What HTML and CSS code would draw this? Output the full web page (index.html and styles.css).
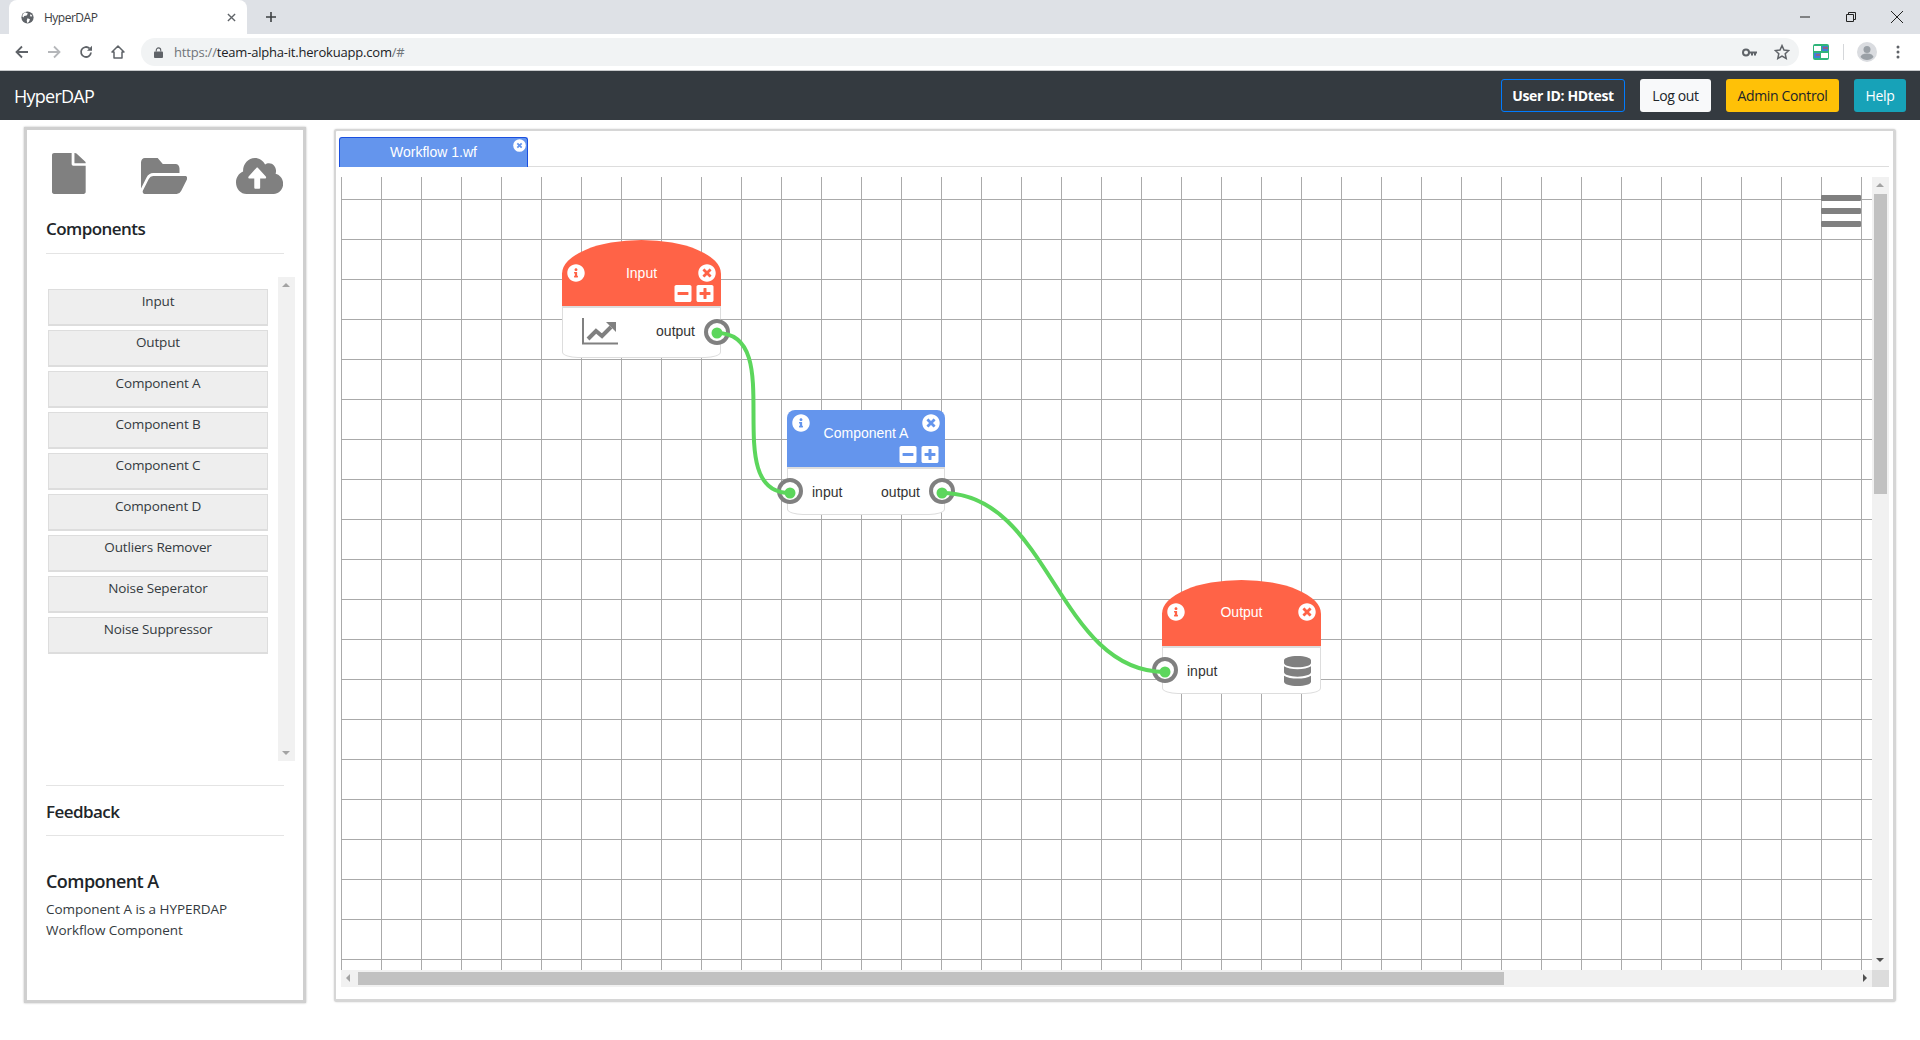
FILE: index.html
```html
<!doctype html>
<html lang="en">
  <head>
    <meta charset="UTF-8" />
    <meta name="viewport" content="width=device-width, initial-scale=1.0" />
    <title>HyperDAP</title>
    <link rel="stylesheet" href="styles.css">
  </head>
  <body>
    <svg class="defs" aria-hidden="true">
      <symbol id="i-info" viewBox="0 0 512 512"><path d="M256 8C119.043 8 8 119.083 8 256c0 136.997 111.043 248 248 248s248-111.003 248-248C504 119.083 392.957 8 256 8zm0 110c23.196 0 42 18.804 42 42s-18.804 42-42 42-42-18.804-42-42 18.804-42 42-42zm56 254c0 6.627-5.373 12-12 12h-88c-6.627 0-12-5.373-12-12v-24c0-6.627 5.373-12 12-12h12v-64h-12c-6.627 0-12-5.373-12-12v-24c0-6.627 5.373-12 12-12h64c6.627 0 12 5.373 12 12v100h12c6.627 0 12 5.373 12 12v24z"/></symbol>
      <symbol id="i-close" viewBox="0 0 512 512"><path d="M256 8C119 8 8 119 8 256s111 248 248 248 248-111 248-248S393 8 256 8zm121.6 313.1c4.7 4.7 4.7 12.3 0 17L338 377.6c-4.7 4.7-12.3 4.7-17 0L256 312l-65.1 65.6c-4.7 4.7-12.3 4.7-17 0L134.4 338c-4.7-4.7-4.7-12.3 0-17l65.6-65-65.6-65.1c-4.7-4.7-4.7-12.3 0-17l39.6-39.6c4.7-4.7 12.3-4.7 17 0l65 65.7 65.1-65.6c4.7-4.7 12.3-4.7 17 0l39.6 39.6c4.7 4.7 4.7 12.3 0 17L312 256l65.6 65.1z"/></symbol>
      <symbol id="i-minus" viewBox="0 32 448 448"><path d="M400 32H48C21.5 32 0 53.5 0 80v352c0 26.5 21.5 48 48 48h352c26.5 0 48-21.5 48-48V80c0-26.5-21.5-48-48-48zM92 296c-6.6 0-12-5.4-12-12v-56c0-6.6 5.4-12 12-12h264c6.6 0 12 5.4 12 12v56c0 6.6-5.4 12-12 12H92z"/></symbol>
      <symbol id="i-plus" viewBox="0 32 448 448"><path d="M400 32H48C21.5 32 0 53.5 0 80v352c0 26.5 21.5 48 48 48h352c26.5 0 48-21.5 48-48V80c0-26.5-21.5-48-48-48zm-32 252c0 6.6-5.4 12-12 12h-92v92c0 6.6-5.4 12-12 12h-56c-6.6 0-12-5.4-12-12v-92H92c-6.6 0-12-5.4-12-12v-56c0-6.6 5.4-12 12-12h92v-92c0-6.6 5.4-12 12-12h56c6.6 0 12 5.4 12 12v92h92c6.6 0 12 5.4 12 12v56z"/></symbol>
    </svg>

    <div class="tabstrip">
      <div class="browser-tab">
        <svg class="favicon" viewBox="0 0 16 16"><circle cx="8" cy="8" r="7.5" fill="#5f6368"/><path d="M5 1.5 8.5 3 7 5.5 4 6 3 8 1.5 6.5 3 3zM8 9l3 1-1 3-2 2-1-3zM12 4l2 2-2 1-1-2z" fill="#fff"/></svg>
        <span class="browser-tab-title">HyperDAP</span>
        <svg class="tab-x" viewBox="0 0 10 10"><path d="M1 1l8 8M9 1l-8 8" stroke="#5f6368" stroke-width="1.5"/></svg>
      </div>
      <svg class="new-tab" viewBox="0 0 12 12"><path d="M6 1v10M1 6h10" stroke="#3c4043" stroke-width="1.6"/></svg>
      <div class="window-controls">
        <svg viewBox="0 0 10 10"><path d="M0 5h10" stroke="#222" stroke-width="1"/></svg>
        <svg viewBox="0 0 10 10"><path d="M.5 2.5h7v7h-7zM2.5 2.5v-2h7v7h-2" fill="none" stroke="#222"/></svg>
        <svg viewBox="0 0 14 14"><path d="M1 1l12 12M13 1L1 13" stroke="#222" stroke-width="1"/></svg>
      </div>
    </div>

    <div class="toolbar">
      <svg class="tool" viewBox="0 0 14 14"><path d="M13 7H2M7 1.5 1.5 7 7 12.5" fill="none" stroke="#5f6368" stroke-width="1.8"/></svg>
      <svg class="tool" viewBox="0 0 14 14"><path d="M1 7h11M7 1.5 12.5 7 7 12.5" fill="none" stroke="#b5b7ba" stroke-width="1.8"/></svg>
      <svg class="tool" viewBox="0 0 14 14"><path d="M12 7.5A5 5 0 1 1 10.5 3.4" fill="none" stroke="#5f6368" stroke-width="1.8"/><path d="M13 .8v5H8z" fill="#5f6368"/></svg>
      <svg class="tool" viewBox="0 0 14 14"><path d="M7 1 1 7h2v6h8V7h2z" fill="none" stroke="#5f6368" stroke-width="1.5" stroke-linejoin="round"/></svg>
      <div class="omnibox">
        <svg class="lock" viewBox="0 0 10 12"><path d="M2.5 5V3.4a2.5 2.5 0 0 1 5 0V5" fill="none" stroke="#5f6368" stroke-width="1.2"/><rect y="5" width="10" height="7" rx="1" fill="#5f6368"/></svg>
        <span class="url"><span class="url-dim">https://</span>team-alpha-it.herokuapp.com<span class="url-dim">/#</span></span>
        <svg class="key" viewBox="0 0 15 9"><circle cx="4" cy="4.5" r="3" fill="none" stroke="#5f6368" stroke-width="2"/><path d="M6 3.5h9v2h-1v2h-2v-2h-1v2H9v-2H6z" fill="#5f6368"/></svg>
        <svg class="star" viewBox="0 0 16 16"><path d="M8 1.6l2 4.4 4.7.5-3.5 3.2 1 4.7L8 12l-4.200 2.400 1-4.700L1.300 6.500 6 6z" fill="none" stroke="#5f6368" stroke-width="1.5"/></svg>
      </div>
      <svg class="ext" viewBox="0 0 16 16"><rect width="16" height="16" rx="2" fill="#2fb57a"/><rect x="1" y="2" width="7" height="5" fill="#fff"/><rect x="8" y="9" width="7" height="5" fill="#fff"/><rect x="9" y="2" width="6" height="5" fill="#3f7fd6"/><rect x="1" y="9" width="6" height="5" fill="#3f7fd6"/><path d="M10 4h5M3 11h4" stroke="#e0433a"/></svg>
      <span class="toolbar-sep"></span>
      <svg class="avatar" viewBox="0 0 20 20"><circle cx="10" cy="10" r="10" fill="#dadce0"/><circle cx="10" cy="7.500" r="3.500" fill="#9aa0a6"/><path d="M3.500 15c1-3 4-3.500 6.500-3.500s5.500.5 6.500 3.500c-1.500 2-4 3-6.500 3s-5-1-6.500-3z" fill="#9aa0a6"/></svg>
      <svg class="menu-dots" viewBox="0 0 4 14"><circle cx="2" cy="2" r="1.500"/><circle cx="2" cy="7" r="1.500"/><circle cx="2" cy="12" r="1.500"/></svg>
    </div>

    <nav class="navbar">
      <a class="brand">HyperDAP</a>
      <div class="nav-buttons">
        <button class="btn btn-user">User ID: HDtest</button>
        <button class="btn btn-light">Log out</button>
        <button class="btn btn-warning">Admin Control</button>
        <button class="btn btn-info">Help</button>
      </div>
    </nav>

    <main class="main">
      <aside class="sidebar">
        <div class="file-icons">
          <svg class="icon-file" viewBox="0 0 384 512" preserveAspectRatio="none"><path d="M224 136V0H24C10.700 0 0 10.700 0 24v464c0 13.300 10.700 24 24 24h336c13.300 0 24-10.700 24-24V160H248c-13.200 0-24-10.800-24-24zm160-14.100v6.100H256V0h6.100c6.400 0 12.500 2.500 17 7l97.900 98c4.500 4.500 7 10.600 7 16.900z"/></svg>
          <svg class="icon-folder" viewBox="0 64 576 384" preserveAspectRatio="none"><path d="M572.694 292.093L500.27 416.248A63.997 63.997 0 0 1 444.989 448H45.025c-18.523 0-30.064-20.093-20.731-36.093l72.424-124.155A64 64 0 0 1 152 256h399.964c18.523 0 30.064 20.093 20.73 36.093zM152 224h328v-48c0-26.51-21.49-48-48-48H272l-64-64H48C21.49 64 0 85.49 0 112v278.046l69.077-118.418C86.214 242.25 117.989 224 152 224z"/></svg>
          <svg class="icon-cloud" viewBox="0 32 640 448" preserveAspectRatio="none"><path d="M537.600 226.600c4.100-10.700 6.400-22.400 6.400-34.600 0-53-43-96-96-96-19.700 0-38.100 6-53.300 16.200C367 64.200 315.300 32 256 32c-88.400 0-160 71.600-160 160 0 2.700.1 5.400.2 8.100C40.200 219.800 0 273.200 0 336c0 79.500 64.500 144 144 144h368c70.700 0 128-57.300 128-128 0-61.900-44-113.600-102.400-125.400zM393.400 288H328v112c0 8.800-7.200 16-16 16h-48c-8.800 0-16-7.200-16-16V288h-65.400c-14.300 0-21.400-17.200-11.300-27.300l105.400-105.400c6.200-6.200 16.400-6.200 22.600 0l105.400 105.400c10.100 10.100 2.900 27.300-11.300 27.300z"/></svg>
        </div>
        <h5 class="side-heading">Components</h5>
        <hr class="rule rule-components">
        <div class="component-box">
          <ul class="component-list">
            <li>Input</li>
            <li>Output</li>
            <li>Component A</li>
            <li>Component B</li>
            <li>Component C</li>
            <li>Component D</li>
            <li>Outliers Remover</li>
            <li>Noise Seperator</li>
            <li>Noise Suppressor</li>
          </ul>
          <div class="vbar vbar-light">
            <span class="arrow arrow-up"></span>
            <span class="arrow arrow-down"></span>
          </div>
        </div>
        <hr class="rule rule-feedback">
        <h5 class="side-heading feedback">Feedback</h5>
        <hr class="rule">
        <h5 class="side-heading detail">Component A</h5>
        <p class="detail-text">Component A is a HYPERDAP<br>Workflow Component</p>
      </aside>

      <section class="workspace">
        <div class="tabs">
          <div class="wf-tab">
            Workflow 1.wf
            <svg class="wf-tab-close" viewBox="0 0 512 512"><circle cx="256" cy="256" r="248" fill="#fff"/><path d="M170 170l172 172M342 170L170 342" stroke="#6495ed" stroke-width="70"/></svg>
          </div>
        </div>
        <div class="stage">
          <div class="canvas">
            <div class="node node-input tomato">
              <div class="node-head">
                <div class="head-row">
                  <svg class="head-icon"><use href="#i-info"/></svg>
                  <span class="node-title">Input</span>
                  <svg class="head-icon"><use href="#i-close"/></svg>
                </div>
                <div class="mini-row">
                  <svg class="mini-icon"><use href="#i-minus"/></svg>
                  <svg class="mini-icon"><use href="#i-plus"/></svg>
                </div>
              </div>
              <div class="node-body">
                <svg class="chart-icon" viewBox="0 0 36 27"><path d="M1 0v25.500h35" fill="none" stroke="#808080" stroke-width="2"/><path d="M6 21l8-8 6 5 9-9" fill="none" stroke="#808080" stroke-width="4"/><path d="M24 4h10v10z" fill="#808080"/></svg>
                <span class="port-label label-right">output</span>
                <span class="port port-right"></span>
              </div>
            </div>

            <div class="node node-comp blue">
              <div class="node-head">
                <div class="head-row">
                  <svg class="head-icon"><use href="#i-info"/></svg>
                  <svg class="head-icon"><use href="#i-close"/></svg>
                </div>
                <span class="node-title comp-title">Component A</span>
                <div class="mini-row">
                  <svg class="mini-icon"><use href="#i-minus"/></svg>
                  <svg class="mini-icon"><use href="#i-plus"/></svg>
                </div>
              </div>
              <div class="node-body">
                <span class="port port-left"></span>
                <span class="port-label label-left">input</span>
                <span class="port-label label-right">output</span>
                <span class="port port-right"></span>
              </div>
            </div>

            <div class="node node-output tomato">
              <div class="node-head">
                <div class="head-row">
                  <svg class="head-icon"><use href="#i-info"/></svg>
                  <span class="node-title">Output</span>
                  <svg class="head-icon"><use href="#i-close"/></svg>
                </div>
              </div>
              <div class="node-body">
                <span class="port port-left"></span>
                <span class="port-label label-left">input</span>
                <svg class="db-icon" viewBox="0 0 448 512" preserveAspectRatio="none"><path d="M448 73.143v45.714C448 159.143 347.667 192 224 192S0 159.143 0 118.857V73.143C0 32.857 100.333 0 224 0s224 32.857 224 73.143zM448 176v102.857C448 319.143 347.667 352 224 352S0 319.143 0 278.857V176c48.125 33.143 136.208 48.572 224 48.572S399.874 209.143 448 176zm0 160v102.857C448 479.143 347.667 512 224 512S0 479.143 0 438.857V336c48.125 33.143 136.208 48.572 224 48.572S399.874 369.143 448 336z"/></svg>
              </div>
            </div>

            <svg class="wires" viewBox="0 0 1531 793">
              <path d="M376 156C449 156 376 316 449 316"/>
              <path d="M601 316C709 316 716 495 824 495"/>
              <circle cx="376" cy="156" r="5.500"/>
              <circle cx="449" cy="316" r="5.500"/>
              <circle cx="601" cy="316" r="5.500"/>
              <circle cx="824" cy="495" r="5.500"/>
            </svg>

            <div class="hamburger"><span></span><span></span><span></span></div>
          </div>

          <div class="vbar">
            <span class="arrow arrow-up"></span>
            <span class="vthumb"></span>
            <span class="arrow arrow-down dark"></span>
          </div>
          <div class="hbar">
            <span class="arrow arrow-left"></span>
            <span class="hthumb"></span>
            <span class="arrow arrow-right"></span>
          </div>
          <div class="corner"></div>
        </div>
      </section>
    </main>
  </body>
</html>
```

FILE: styles.css
```css
* {
  box-sizing: border-box;
}

html,
body {
  height: 100%;
}

body {
  margin: 0;
  display: flex;
  flex-direction: column;
  overflow: hidden;
  background: #fff;
  color: #212529;
  font-family: "Open Sans", "Noto Sans", sans-serif;
  font-size: 14px;
}

.defs {
  position: absolute;
  width: 0;
  height: 0;
}

/* browser frame */
.tabstrip {
  height: 34px;
  flex: none;
  display: flex;
  align-items: flex-end;
  padding-left: 9px;
  background: #dee1e6;
}

.browser-tab {
  width: 238px;
  height: 34px;
  display: flex;
  align-items: center;
  padding: 0 8px 0 12px;
  background: #fff;
  border-radius: 8px 8px 0 0;
}

.favicon {
  width: 13px;
  height: 13px;
  margin-right: 10px;
}

.browser-tab-title {
  flex: 1;
  font-size: 12px;
  letter-spacing: -0.5px;
  color: #3c4043;
}

.tab-x {
  width: 9px;
  height: 9px;
  margin-right: 3px;
}

.new-tab {
  width: 12px;
  height: 12px;
  margin: 0 0 11px 18px;
}

.window-controls {
  margin-left: auto;
  height: 100%;
  display: flex;
  align-items: center;
  gap: 36px;
  padding-right: 16px;
}

.window-controls svg {
  width: 10px;
  height: 10px;
}

.window-controls svg:last-child {
  width: 14px;
  height: 14px;
  margin-left: -2px;
}

.toolbar {
  height: 36px;
  flex: none;
  display: flex;
  align-items: center;
  padding: 0 16px 0 15px;
  background: #fff;
}

.tool {
  width: 14px;
  height: 14px;
  margin-right: 18px;
}

.omnibox {
  width: 1658px;
  height: 28px;
  margin-left: -2px;
  display: flex;
  align-items: center;
  padding: 0 9px 0 13px;
  border-radius: 14px;
  background: #f1f3f4;
}

.lock {
  width: 9px;
  height: 11px;
  margin-right: 11px;
}

.url {
  flex: 1;
  font-size: 13px;
  letter-spacing: -0.2px;
  color: #202124;
}

.url-dim {
  color: #70757a;
}

.key {
  width: 15px;
  height: 9px;
  margin-right: 17px;
}

.star {
  width: 16px;
  height: 16px;
}

.ext {
  width: 16px;
  height: 16px;
  margin-left: 14px;
}

.toolbar-sep {
  width: 1px;
  height: 16px;
  margin: 0 13px 0 14px;
  background: #d5d7da;
}

.avatar {
  width: 20px;
  height: 20px;
}

.menu-dots {
  width: 4px;
  height: 14px;
  margin-left: 19px;
  fill: #5f6368;
}

/* app header */
.navbar {
  height: 50px;
  flex: none;
  display: flex;
  align-items: center;
  justify-content: space-between;
  padding: 0 14px 0 14px;
  background: #343a40;
  border-top: 1px solid #c8cacc;
}

.brand {
  font-size: 18px;
  letter-spacing: -0.75px;
  color: #fff;
}

.nav-buttons {
  display: flex;
  gap: 15px;
}

.btn {
  height: 33px;
  padding: 0;
  border: 1px solid transparent;
  border-radius: 3px;
  font-family: inherit;
  font-size: 14px;
  letter-spacing: -0.35px;
}

.btn-user {
  width: 124px;
  background: transparent;
  border-color: #007bff;
  color: #fff;
  font-weight: 700;
}

.btn-light {
  width: 71px;
  background: #f8f9fa;
  color: #212529;
}

.btn-warning {
  width: 113px;
  background: #ffc107;
  color: #212529;
}

.btn-info {
  width: 52px;
  background: #17a2b8;
  color: #fff;
}

/* page */
.main {
  flex: 1;
  min-height: 0;
  display: flex;
  align-items: flex-start;
  gap: 28px;
  padding: 8px 25px 0 24px;
}

.sidebar {
  width: 282px;
  height: 876px;
  flex: none;
  margin-top: -1px;
  padding: 22px 20px 0 19px;
  background: #fff;
  border: 3px solid #cfcfcf;
  box-shadow: 0 0 2px #bbb;
}

.file-icons {
  height: 42px;
  display: flex;
  align-items: flex-end;
  fill: #808080;
}

.icon-file {
  width: 35px;
  height: 41px;
  margin-left: 6px;
}

.icon-folder {
  width: 48px;
  height: 36px;
  margin-left: 55px;
}

.icon-cloud {
  width: 49px;
  height: 36px;
  margin-left: 49px;
}

.side-heading {
  margin: 0;
  font-size: 17px;
  font-weight: 600;
  line-height: 24px;
  letter-spacing: -0.55px;
}

.side-heading:first-of-type {
  margin-top: 23px;
}

.rule {
  width: 238px;
  height: 1px;
  margin: 0;
  border: 0;
  background: #e4e4e4;
}

.rule-components {
  margin-top: 12px;
}

.component-box {
  height: 484px;
  margin: 23px -12px 0 0;
  display: flex;
  justify-content: space-between;
}

.component-list {
  width: 220px;
  margin: 12px 0 0 2px;
  padding: 0;
  list-style: none;
}

.component-list li {
  height: 37px;
  margin-bottom: 4px;
  padding-top: 1px;
  background: #eee;
  border: 1px solid #ddd;
  border-bottom-width: 2px;
  color: #343a40;
  font-size: 13.5px;
  line-height: 21px;
  letter-spacing: -0.15px;
  text-align: center;
}

.vbar {
  position: relative;
  width: 17px;
  background: #f1f1f1;
}

.vbar-light .arrow-up {
  border-bottom-color: #a3a3a3;
}

.vbar-light .arrow-down {
  border-top-color: #a3a3a3;
}

.arrow {
  position: absolute;
  width: 0;
  height: 0;
  border: 4px solid transparent;
}

.vbar .arrow {
  left: 4px;
}

.arrow-up {
  top: 6px;
  border-top-width: 0;
  border-bottom-color: #a3a3a3;
}

.arrow-down {
  bottom: 6px;
  border-bottom-width: 0;
  border-top-color: #a3a3a3;
}

.arrow-down.dark {
  bottom: 8px;
  border-top-color: #505050;
}

.arrow-left {
  left: 5px;
  top: 4px;
  border-left-width: 0;
  border-right-color: #a3a3a3;
}

.arrow-right {
  right: 5px;
  top: 4px;
  border-right-width: 0;
  border-left-color: #505050;
}

.rule-feedback {
  margin-top: 24px;
}

.feedback {
  margin: 14px 0 11px;
}

.detail {
  margin-top: 33px;
  font-size: 18px;
}

.detail-text {
  margin: 6px 0 0;
  color: #343a40;
  font-size: 13.5px;
  line-height: 21px;
  letter-spacing: -0.05px;
}

/* workflow area */
.workspace {
  flex: 1;
  height: 873px;
  margin-top: 1px;
  display: flex;
  flex-direction: column;
  padding: 6px 4px 0 3px;
  background: #fff;
  border: 2px solid #d6d6d6;
  border-right-width: 3px;
  border-bottom-width: 3px;
  border-radius: 3px;
  box-shadow: 0 0 2px #ccc;
  font-family: "Liberation Sans", Arial, sans-serif;
}

.tabs {
  height: 30px;
  flex: none;
  border-bottom: 1px solid #ddd;
}

.wf-tab {
  position: relative;
  width: 189px;
  height: 30px;
  display: flex;
  align-items: center;
  justify-content: center;
  padding-bottom: 2px;
  background: #6495ed;
  border: 1px solid #1a4fe0;
  border-bottom: 0;
  border-radius: 3px 3px 0 0;
  color: #fff;
  font-size: 14px;
}

.wf-tab-close {
  position: absolute;
  top: 1px;
  right: 1px;
  width: 13px;
  height: 13px;
}

.stage {
  margin: 10px 0 0 2px;
  display: grid;
  grid-template-columns: 1531px 17px;
  grid-template-rows: 793px 17px;
}

.canvas {
  position: relative;
  overflow: hidden;
  background-color: #fff;
  background-image:
    linear-gradient(#aaa 1px, transparent 1px),
    linear-gradient(90deg, #aaa 1px, transparent 1px);
  background-size: 40px 40px;
  background-position: 0 22px;
}

.node {
  position: absolute;
  width: 159px;
  display: flex;
  flex-direction: column;
  color: #333;
}

.node-input {
  left: 221px;
  top: 63px;
}

.node-comp {
  left: 446px;
  top: 233px;
  width: 158px;
}

.node-output {
  left: 821px;
  top: 403px;
}

.node-head {
  display: flex;
  flex-direction: column;
  height: 66px;
  padding: 0 5px;
  color: #fff;
  fill: #fff;
}

.tomato .node-head {
  padding-top: 24px;
  background: #ff6347;
  border-radius: 80px 80px 0 0 / 34px 34px 0 0;
}

.node-output .node-head {
  padding-top: 23px;
}

.blue .node-head {
  height: 57px;
  padding-top: 4px;
  background: #6495ed;
  border-radius: 8px 8px 0 0;
}

.head-row {
  display: flex;
  align-items: center;
  justify-content: space-between;
}

.head-icon {
  width: 18px;
  height: 18px;
}

.node-title {
  font-size: 14px;
  line-height: 18px;
}

.comp-title {
  margin-top: -8px;
  text-align: center;
}

.mini-row {
  display: flex;
  justify-content: flex-end;
  gap: 4px;
  margin: 3px 2px 0 0;
}

.blue .mini-row {
  margin: 4px 1px 0 0;
}

.mini-icon {
  width: 18px;
  height: 17px;
}

.node-body {
  position: relative;
  height: 52px;
  display: flex;
  align-items: center;
  padding: 0 14px 4px 19px;
  background: #fff;
  border: 1px solid #ddd;
  border-top: 2px solid #ddd;
  border-radius: 0 0 16px 16px / 0 0 6px 6px;
  font-size: 14px;
}

.blue .node-body {
  height: 48px;
  padding-bottom: 0;
}

.node-output .node-body {
  height: 48px;
  padding-right: 9px;
  padding-bottom: 0;
}

.chart-icon {
  width: 36px;
  height: 27px;
  margin-top: 2px;
}

.db-icon {
  width: 27px;
  height: 30px;
  margin-left: auto;
  fill: #808080;
}

.label-right {
  margin-left: auto;
  margin-right: 10px;
}

.label-left {
  margin-left: 5px;
}

.node-input .label-right {
  margin-right: 11px;
}

.port {
  position: absolute;
  top: 50%;
  width: 26px;
  height: 26px;
  margin-top: -14px;
  background: #fff;
  border: 4px solid #808080;
  border-radius: 50%;
}

.port-right {
  right: -11px;
}

.port-left {
  left: -11px;
}

.node-input .port-right {
  right: -10px;
}

.wires {
  position: absolute;
  inset: 0;
  width: 1531px;
  height: 793px;
  pointer-events: none;
}

.wires path {
  fill: none;
  stroke: #5cd65c;
  stroke-width: 4;
}

.wires circle {
  fill: #5cd65c;
}

.hamburger {
  position: absolute;
  top: 18px;
  right: 11px;
  width: 40px;
  display: flex;
  flex-direction: column;
  gap: 7px;
}

.hamburger span {
  height: 6px;
  background: #808080;
  border-radius: 1px;
}

.stage > .vbar .vthumb {
  position: absolute;
  left: 2px;
  top: 17px;
  width: 13px;
  height: 300px;
  background: #c1c1c1;
}

.hbar {
  position: relative;
  background: #f1f1f1;
}

.hthumb {
  position: absolute;
  left: 17px;
  top: 2px;
  width: 1146px;
  height: 13px;
  background: #c1c1c1;
}

.corner {
  background: #dcdcdc;
}
```
